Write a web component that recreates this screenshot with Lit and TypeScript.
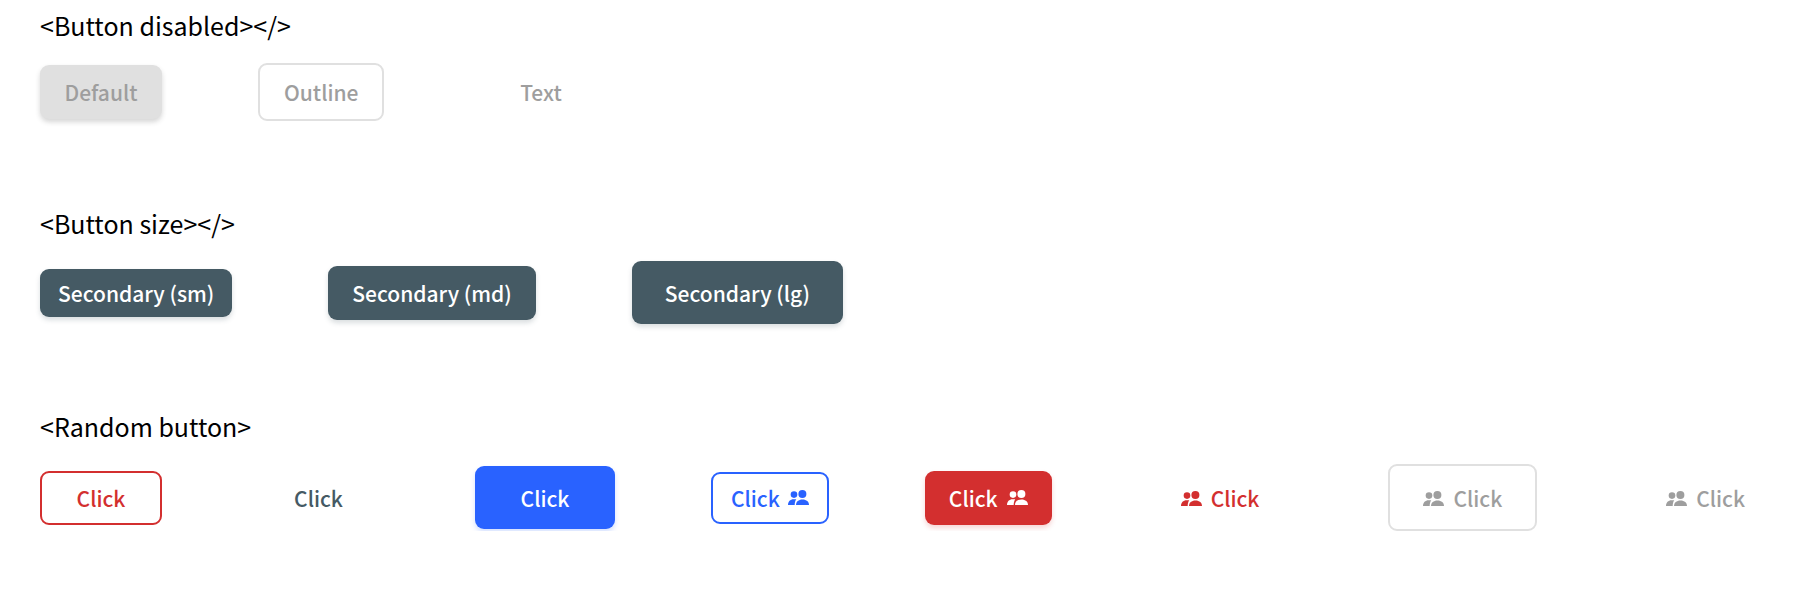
import { LitElement, html, css, svg } from "lit";
import { customElement, property } from "lit/decorators.js";
import { classMap } from "lit/directives/class-map.js";

type Variant = "default" | "outline" | "text";
type Color = "secondary" | "primary" | "danger";
type Size = "sm" | "md" | "lg";

interface ButtonSpec {
  label: string;
  variant?: Variant;
  color?: Color;
  size?: Size;
  disabled?: boolean;
  startIcon?: boolean;
  endIcon?: boolean;
}

const peopleIcon = html`<svg class="icon" viewBox="0 0 21 15" aria-hidden="true">
  ${svg`
    <circle cx="6" cy="4.6" r="3.3" />
    <circle cx="14.4" cy="4" r="4" />
    <path d="M0 15C0 11.4 2.2 9.2 5.6 9.2H8.3C7.3 10.5 6.7 12.5 6.7 15z" />
    <path d="M8 15C8 11.6 10.5 9.4 14.5 9.4S21 11.6 21 15z" />
  `}
</svg>`;

@customElement("demo-button")
class DemoButton extends LitElement {
  @property() variant: Variant = "default";
  @property() color: Color = "secondary";
  @property() size: Size = "md";
  @property({ type: Boolean }) disabled = false;
  @property({ type: Boolean }) startIcon = false;
  @property({ type: Boolean }) endIcon = false;

  static styles = css`
    :host {
      display: block;
      flex: none;
    }
    .button {
      --tone: #455a64;
      --shadow: rgba(69, 90, 100, 0.2);
      display: flex;
      align-items: center;
      justify-content: center;
      gap: 9px;
      box-sizing: border-box;
      min-width: 122px;
      margin: 0;
      border: 0 solid var(--tone);
      border-radius: 9px;
      background: none;
      color: var(--tone);
      font: 500 21px/30px "Noto Sans CJK JP", "Noto Sans CJK KR", sans-serif;
      white-space: nowrap;
      cursor: pointer;
    }
    .primary {
      --tone: #2962ff;
      --shadow: rgba(41, 98, 255, 0.2);
    }
    .danger {
      --tone: #d32f2f;
      --shadow: rgba(211, 47, 47, 0.2);
    }
    .sm {
      min-width: 0;
      gap: 8px;
      padding: 9px 18px;
    }
    .md {
      padding: 12px 24px;
    }
    .lg {
      padding: 17px 33px 16px;
    }
    .default {
      background: var(--tone);
      color: #fff;
      box-shadow: 0 3px 5px var(--shadow);
    }
    .text.md {
      min-width: 121px;
    }
    .default.lg {
      min-width: 140px;
    }
    .outline {
      border-width: 2px;
    }
    .outline.md:enabled {
      padding-block: 10px;
    }
    .button:disabled {
      --tone: #e0e0e0;
      --shadow: rgba(51, 51, 51, 0.2);
      color: #9e9e9e;
      cursor: not-allowed;
    }
    .icon {
      width: 21px;
      height: 15px;
      flex: none;
      fill: currentColor;
    }
  `;

  render() {
    const classes = {
      button: true,
      [this.variant]: true,
      [this.color]: true,
      [this.size]: true,
    };
    return html`<button type="button" class=${classMap(classes)} ?disabled=${this.disabled}>
      ${this.startIcon ? peopleIcon : null}<slot></slot>${this.endIcon ? peopleIcon : null}
    </button>`;
  }
}

const sections: { title: string; buttons: ButtonSpec[] }[] = [
  {
    title: "<Button disabled></>",
    buttons: [
      { label: "Default", disabled: true },
      { label: "Outline", variant: "outline", disabled: true },
      { label: "Text", variant: "text", disabled: true },
    ],
  },
  {
    title: "<Button size></>",
    buttons: [
      { label: "Secondary (sm)", size: "sm" },
      { label: "Secondary (md)", size: "md" },
      { label: "Secondary (lg)", size: "lg" },
    ],
  },
  {
    title: "<Random button>",
    buttons: [
      { label: "Click", variant: "outline", color: "danger" },
      { label: "Click", variant: "text" },
      { label: "Click", color: "primary", size: "lg" },
      { label: "Click", variant: "outline", color: "primary", size: "sm", endIcon: true },
      { label: "Click", color: "danger", endIcon: true },
      { label: "Click", variant: "text", color: "danger", size: "lg", startIcon: true },
      { label: "Click", variant: "outline", size: "lg", disabled: true, startIcon: true },
      { label: "Click", variant: "text", size: "lg", disabled: true, startIcon: true },
    ],
  },
];

@customElement("app-root")
class AppRoot extends LitElement {
  static styles = css`
    :host {
      display: block;
      padding: 7px 0 0 40px;
      background: #fff;
      color: #000;
      font-family: "Noto Sans CJK JP", "Noto Sans CJK KR", sans-serif;
    }
    .page {
      display: flex;
      flex-direction: column;
      gap: 84px;
    }
    .title {
      margin: 0 0 20px;
      font-size: 25px;
      font-weight: 400;
      line-height: 36px;
    }
    .row {
      display: flex;
      align-items: center;
      gap: 96px;
    }
  `;

  render() {
    return html`<main class="page">
      ${sections.map(
        (section) => html`<section>
          <h2 class="title">${section.title}</h2>
          <div class="row">
            ${section.buttons.map(
              (b) => html`<demo-button
                .variant=${b.variant ?? "default"}
                .color=${b.color ?? "secondary"}
                .size=${b.size ?? "md"}
                .disabled=${b.disabled ?? false}
                .startIcon=${b.startIcon ?? false}
                .endIcon=${b.endIcon ?? false}
                >${b.label}</demo-button
              >`
            )}
          </div>
        </section>`
      )}
    </main>`;
  }
}
